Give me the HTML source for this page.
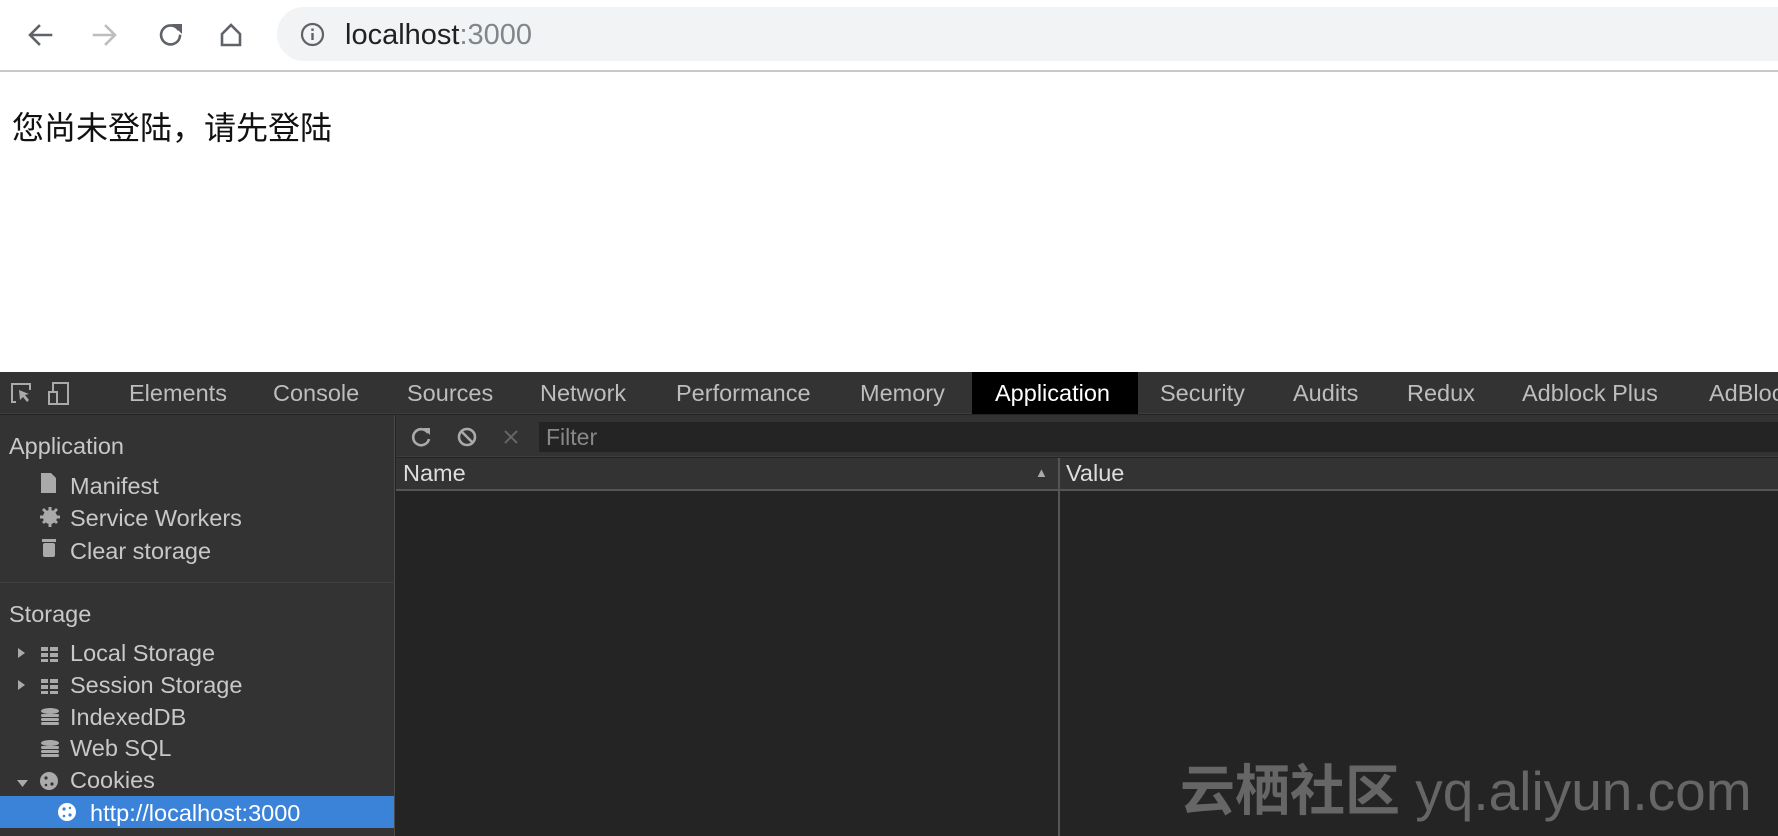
<!DOCTYPE html>
<html><head><meta charset="utf-8"><style>
*{margin:0;padding:0;box-sizing:border-box}
body{width:1778px;height:836px;overflow:hidden;background:#fff;font-family:"Liberation Sans","Noto Sans CJK SC",sans-serif;position:relative}
.a{position:absolute;white-space:nowrap}
.tab{position:absolute;top:372px;height:42px;line-height:42px;font-size:23.5px;color:#bdbdbd}
.side{font-size:23.5px;color:#c8c8c8;position:absolute;white-space:nowrap;line-height:28px}
</style></head><body>
<svg class="a" style="left:26px;top:20px" width="240" height="30" viewBox="0 0 240 30">
<g fill="none" stroke-width="2.6" stroke-linecap="square">
<path d="M25 15H5M13 6l-9 9 9 9" stroke="#5f6368"/>
<path d="M68 15h20M80 6l9 9-9 9" stroke="#bdbdbd"/>
<path d="M152 9a9.5 9.5 0 1 0 2 7" stroke="#5f6368"/>
<path d="M196 14l9-9 9 9v11h-18z" stroke="#5f6368" stroke-linejoin="miter"/>
</g>
<path d="M146 4l10 0 0 10z" fill="#5f6368"/>
</svg>
<div class="a" style="left:277px;top:7px;width:1530px;height:54px;border-radius:27px;background:#f1f3f4"></div>
<svg class="a" style="left:300px;top:22px" width="25" height="25" viewBox="0 0 25 25"><circle cx="12.5" cy="12.5" r="10.5" fill="none" stroke="#5f6368" stroke-width="2.2"/><rect x="11.3" y="11" width="2.4" height="7" fill="#5f6368"/><rect x="11.3" y="6.5" width="2.4" height="2.4" fill="#5f6368"/></svg>
<div class="a" style="left:345px;top:19px;font-size:29px;color:#202124">localhost<span style="color:#80868b">:3000</span></div>
<div class="a" style="left:0;top:70px;width:1778px;height:2px;background:#c8c8c8"></div>
<div class="a" style="left:12px;top:103px;font-size:32px;color:#111">您尚未登陆，请先登陆</div>

<div class="a" style="left:0;top:372px;width:1778px;height:464px;background:#242424"></div>
<div class="a" style="left:0;top:372px;width:1778px;height:42px;background:#333;border-bottom:1px solid #3d3d3d"></div>
<svg class="a" style="left:10px;top:382px" width="70" height="24" viewBox="0 0 70 24"><g fill="none" stroke="#aaa" stroke-width="2"><path d="M6 20H2V2h18v6"/><rect x="39" y="10" width="8" height="12"/><path d="M43 10V1h15v21H47"/></g><path d="M9 8l10 4-4 1 4 5-2 2-4-5-3 3z" fill="#aaa"/></svg>
<div class="a" style="left:972px;top:372px;width:166px;height:42px;background:#000"></div>
<div class="tab" style="left:129px">Elements</div>
<div class="tab" style="left:273px">Console</div>
<div class="tab" style="left:407px">Sources</div>
<div class="tab" style="left:540px">Network</div>
<div class="tab" style="left:676px">Performance</div>
<div class="tab" style="left:860px">Memory</div>
<div class="tab" style="left:995px;color:#fff">Application</div>
<div class="tab" style="left:1160px">Security</div>
<div class="tab" style="left:1293px">Audits</div>
<div class="tab" style="left:1407px">Redux</div>
<div class="tab" style="left:1522px">Adblock Plus</div>
<div class="tab" style="left:1709px">AdBlock</div>

<div class="a" style="left:0;top:415px;width:395px;height:421px;background:#333;border-right:1px solid #4a4a4a"></div>
<div class="a" style="left:0;top:582px;width:394px;height:1px;background:#3e3e3e"></div>
<div class="side" style="left:9px;top:432px">Application</div>
<div class="side" style="left:70px;top:472px">Manifest</div>
<div class="side" style="left:70px;top:504px">Service Workers</div>
<div class="side" style="left:70px;top:537px">Clear storage</div>
<div class="side" style="left:9px;top:600px">Storage</div>
<div class="side" style="left:70px;top:639px">Local Storage</div>
<div class="side" style="left:70px;top:671px">Session Storage</div>
<div class="side" style="left:70px;top:703px">IndexedDB</div>
<div class="side" style="left:70px;top:734px">Web SQL</div>
<div class="side" style="left:70px;top:766px">Cookies</div>
<div class="a" style="left:0;top:796px;width:394px;height:32px;background:#3a83d8"></div>
<div class="side" style="left:90px;top:799px;color:#fff">http://localhost:3000</div>
<svg class="a" style="left:0;top:470px" width="90" height="360" viewBox="0 0 90 360"><g fill="#aaa">
<path d="M41 3h10l5 5v15H41z"/>
<circle cx="50" cy="47" r="7"/><path d="M48.5 37h3v20h-3zM40 45.5h20v3H40zM42 40l2-2 14 14-2 2zM56 38l2 2-14 14-2-2z"/>
<rect x="42" y="69" width="14" height="3"/><rect x="43" y="73" width="12" height="14" rx="2"/>
<path d="M18 178l7 5-7 5zM18 210l7 5-7 5zM17 310h11l-5.5 7z"/>
<rect x="41" y="177" width="7" height="4"/><rect x="50" y="177" width="8" height="4"/><rect x="41" y="183" width="7" height="4"/><rect x="50" y="183" width="8" height="4"/><rect x="41" y="189" width="7" height="3"/><rect x="50" y="189" width="8" height="3"/>
<rect x="41" y="209" width="7" height="4"/><rect x="50" y="209" width="8" height="4"/><rect x="41" y="215" width="7" height="4"/><rect x="50" y="215" width="8" height="4"/><rect x="41" y="221" width="7" height="3"/><rect x="50" y="221" width="8" height="3"/>
<ellipse cx="50" cy="241" rx="9" ry="3"/><rect x="41" y="244" width="18" height="3" rx="1.5"/><rect x="41" y="248" width="18" height="3" rx="1.5"/><rect x="41" y="252" width="18" height="3" rx="1.5"/>
<ellipse cx="50" cy="273" rx="9" ry="3"/><rect x="41" y="276" width="18" height="3" rx="1.5"/><rect x="41" y="280" width="18" height="3" rx="1.5"/><rect x="41" y="284" width="18" height="3" rx="1.5"/>
<circle cx="49" cy="311" r="9"/></g>
<g fill="#333"><circle cx="46" cy="308" r="1.6"/><circle cx="52" cy="314" r="1.6"/><circle cx="46" cy="315" r="1.3"/></g>
<circle cx="67" cy="342" r="9" fill="#fff"/><g fill="#3a83d8"><circle cx="64" cy="339" r="1.6"/><circle cx="70" cy="345" r="1.6"/><circle cx="64" cy="346" r="1.3"/><circle cx="70" cy="338" r="1.2"/></g>
</svg>

<div class="a" style="left:396px;top:415px;width:1382px;height:42px;background:#333;border-bottom:1px solid #3d3d3d"></div>
<svg class="a" style="left:410px;top:425px" width="110" height="24" viewBox="0 0 110 24"><g fill="none" stroke="#aaa" stroke-width="2.6"><path d="M18 8a8 8 0 1 0 1 6"/><circle cx="57" cy="12" r="8"/><path d="M51 6l12 12"/></g><path d="M13 3h7v7z" fill="#aaa"/><path d="M95 6l12 12M107 6L95 18" stroke="#666" stroke-width="2"/></svg>
<div class="a" style="left:539px;top:422px;width:1239px;height:30px;background:#242424"></div>
<div class="a" style="left:546px;top:424px;font-size:23px;color:#888">Filter</div>
<div class="a" style="left:396px;top:458px;width:1382px;height:33px;background:#333;border-bottom:2px solid #555"></div>
<div class="a" style="left:403px;top:460px;font-size:23.5px;color:#ddd">Name</div>
<div class="a" style="left:1035px;top:465px;font-size:13px;color:#aaa">▲</div>
<div class="a" style="left:1058px;top:458px;width:2px;height:378px;background:#555"></div>
<div class="a" style="left:1066px;top:460px;font-size:23.5px;color:#ddd">Value</div>

<div class="a" style="left:1180px;top:761px;font-size:55px;color:#666;line-height:60px"><b style="font-weight:bold">云栖社区</b> yq.aliyun.com</div>
</body></html>
